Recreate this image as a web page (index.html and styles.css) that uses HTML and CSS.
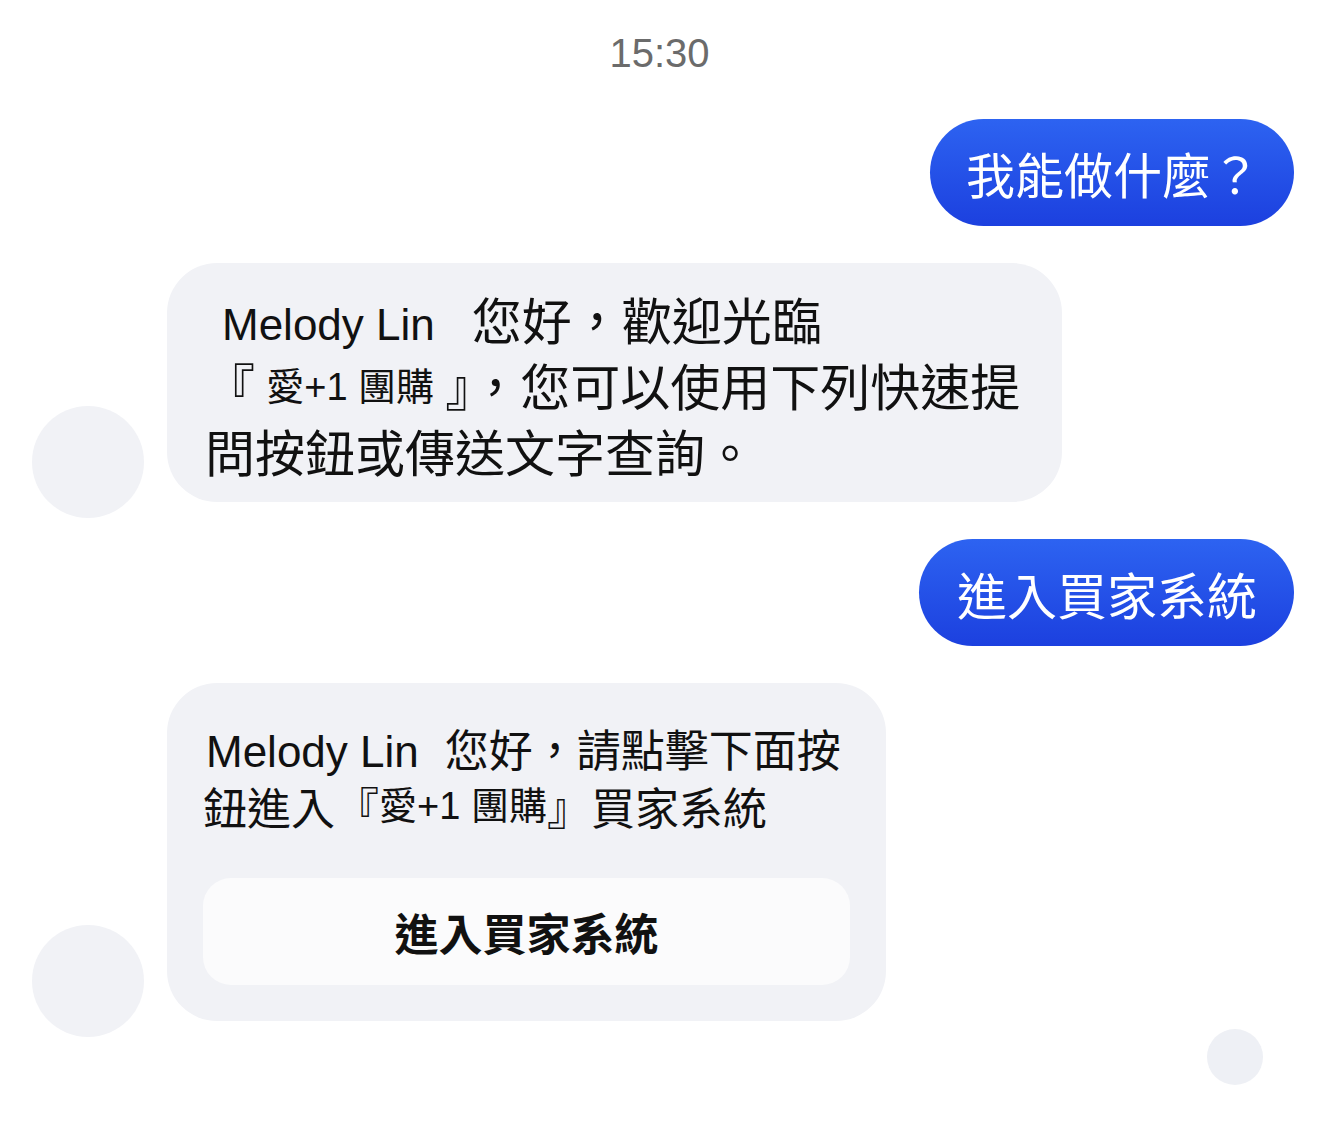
FILE: index.html
```html
<!DOCTYPE html>
<html lang="zh-Hant">
<head>
<meta charset="utf-8">
<title>Chat</title>
<link rel="stylesheet" href="styles.css">
</head>
<body>
<div class="time">15:30</div>
<div class="messages">
  <div class="sent sent-ask">我能做什麼？</div>
  <div class="received">
    <div class="avatar"></div>
    <div class="bubble bubble-welcome">
      <div class="line"><span class="name name-indent">Melody Lin</span>您好，歡迎光臨</div>
      <div class="line">『 <span class="brand">愛+1 團購</span> 』，您可以使用下列快速提</div>
      <div class="line">問按鈕或傳送文字查詢。</div>
    </div>
  </div>
  <div class="sent sent-enter">進入買家系統</div>
  <div class="received">
    <div class="avatar"></div>
    <div class="bubble bubble-entry">
      <div class="line"><span class="name name-tight">Melody Lin</span>您好，請點擊下面按</div>
      <div class="line">鈕進入『<span class="brand">愛+1 團購</span>』買家系統</div>
      <div class="quick-btn">進入買家系統</div>
    </div>
  </div>
  <div class="typing"></div>
</div>
</body>
</html>
```

FILE: styles.css
```css
html, body {
  margin: 0;
  padding: 0;
  background: #ffffff;
}

body {
  font-family: "Noto Sans CJK TC", "Liberation Sans", sans-serif;
  color: #111111;
}

.time {
  margin-top: 33px;
  height: 40px;
  line-height: 40px;
  text-align: center;
  font-family: "Liberation Sans", sans-serif;
  font-size: 40px;
  color: #6b6b6b;
}

.messages {
  margin-top: 46px;
  padding: 0 25px 40px 32px;
  display: flex;
  flex-direction: column;
  gap: 37px;
}

.sent {
  align-self: flex-end;
  box-sizing: border-box;
  height: 107px;
  border-radius: 54px;
  display: flex;
  align-items: center;
  background: linear-gradient(180deg, #2d63f1 0%, #1c40df 100%);
  color: #ffffff;
  white-space: nowrap;
}

.sent-ask {
  padding: 0 34px 0 36px;
  font-size: 49px;
}

.sent-enter {
  padding: 0 37px 0 38px;
  font-size: 50px;
}

.received {
  display: flex;
  align-items: flex-end;
  gap: 23px;
}

.avatar {
  flex: none;
  width: 112px;
  height: 112px;
  border-radius: 50%;
  background: #f1f2f6;
  margin-bottom: -16px;
}

.bubble {
  box-sizing: border-box;
  background: #f1f2f6;
  border-radius: 50px;
  color: #111111;
}

.bubble-welcome {
  width: 895px;
  padding: 22px 37px 19px 38px;
  font-size: 50px;
  line-height: 66px;
}

.bubble-entry {
  width: 719px;
  padding: 36px;
  font-size: 44px;
  line-height: 58px;
}

.line {
  white-space: nowrap;
}

.name {
  font-family: "Liberation Sans", sans-serif;
  font-size: 44px;
  line-height: 1;
}

.name-indent {
  margin-left: 17px;
  margin-right: 37px;
}

.name-tight {
  margin-left: 3px;
  margin-right: 26px;
}

.brand {
  font-family: "Liberation Sans", "Noto Sans CJK TC", sans-serif;
  font-size: 38px;
  line-height: 1;
  vertical-align: 0.16em;
}

.quick-btn {
  margin-top: 43px;
  height: 107px;
  border-radius: 28px;
  background: #fbfbfc;
  display: flex;
  align-items: center;
  justify-content: center;
  font-size: 44px;
  font-weight: 700;
  color: #111111;
}

.typing {
  align-self: flex-end;
  margin-top: -29px;
  margin-right: 31px;
  width: 56px;
  height: 56px;
  border-radius: 50%;
  background: #eef0f5;
}
```
